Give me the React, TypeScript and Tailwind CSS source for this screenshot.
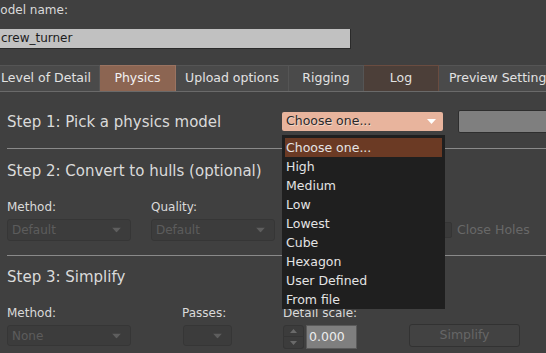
import React from "react";

const Down = ({ color, w = 9, h = 5 }: { color: string; w?: number; h?: number }) => (
  <svg width={w} height={h} viewBox={`0 0 ${w} ${h}`}>
    <path d={`M0 0H${w}L${w / 2} ${h}Z`} fill={color} />
  </svg>
);
const Up = ({ color, w = 7, h = 4 }: { color: string; w?: number; h?: number }) => (
  <svg width={w} height={h} viewBox={`0 0 ${w} ${h}`}>
    <path d={`M0 ${h}H${w}L${w / 2} 0Z`} fill={color} />
  </svg>
);

const DisabledSelect = ({ text, w, h }: { text?: string; w: string; h: string }) => (
  <div
    className={`${w} ${h} relative flex items-center rounded-[3px] border border-[#363636] bg-[#3c3c3c] pl-[4px] text-[#5c5c5c]`}
  >
    {text}
    <div className="absolute right-[9px] top-1/2 -translate-y-1/2 flex">
      <Down color="#5e5e5e" />
    </div>
  </div>
);

export default function App() {
  const items = ["Choose one...", "High", "Medium", "Low", "Lowest", "Cube", "Hexagon", "User Defined", "From file"];
  return (
    <div className="relative w-[546px] h-[353px] overflow-hidden bg-[#404040] font-['DejaVu_Sans',sans-serif] text-[12px] text-[#dadada]">
      <div className="ml-[-10px] h-[29px] pt-[3px] leading-[14px] whitespace-nowrap">Model name:</div>
      <div className="ml-[-10px] h-[20px] w-[361px] border-r border-b border-[#2a2a2a] bg-[#c1c1c1] pl-[11px] leading-[19px] text-[#1c1c1c]">
        crew_turner
      </div>

      <div className="mt-[16px] ml-[-7px] flex h-[27px] border-b border-[#6a6a6a] whitespace-nowrap text-[12.5px] text-[#e2e2e2]">
        <div className="flex h-[26px] w-[107px] shrink-0 items-center justify-center border-t border-r border-[#555] bg-[#4a4a4a]">Level of Detail</div>
        <div className="flex h-[26px] w-[76px] shrink-0 items-center justify-center border-t border-r border-[#9a7361] bg-[#8c6552] text-[#f2f2f2]">Physics</div>
        <div className="flex h-[26px] w-[113px] shrink-0 items-center justify-center border-t border-r border-[#555] bg-[#4a4a4a]">Upload options</div>
        <div className="flex h-[26px] w-[75px] shrink-0 items-center justify-center border-t border-r border-[#555] bg-[#4a4a4a]">Rigging</div>
        <div className="flex h-[26px] w-[75px] shrink-0 items-center justify-center border-t border-r border-[#6a4c40] bg-[#4c3f39]">Log</div>
        <div className="flex h-[26px] w-[124px] shrink-0 items-center justify-center border-t border-[#555] bg-[#4a4a4a]">Preview Settings</div>
      </div>

      {/* Step 1 */}
      <div className="mt-[18px] flex h-[23px] items-center">
        <div className="w-[282px] shrink-0 pl-[7px] text-[15px] leading-[18px] whitespace-nowrap">Step 1: Pick a physics model</div>
        <div className="relative flex h-[19px] w-[161px] shrink-0 items-center rounded-[2px] bg-[#e8b49d] pl-[4px] text-[12.5px] text-[#2a2a2a] [text-shadow:1px_1px_0_rgba(255,255,255,0.45)]">
          Choose one...
          <div className="absolute right-[7px] top-[7px] flex">
            <Down color="#ffffff" />
          </div>
        </div>
        <div className="ml-[15px] h-[23px] flex-1 rounded-[2px] border border-[#2e2e2e] bg-[#7f7f7f] mr-[-10px]" />
      </div>

      <div className="mt-[15px] ml-[7px] h-px bg-[#8a8a8a]" />

      {/* Step 2 */}
      <div className="mt-[13px] pl-[7px] text-[15px] leading-[18px] whitespace-nowrap">Step 2: Convert to hulls (optional)</div>
      <div className="mt-[20px] flex leading-[14px]">
        <div className="w-[151px] shrink-0 pl-[7px]">Method:</div>
        <div>Quality:</div>
      </div>
      <div className="mt-[5px] flex h-[22px] items-center pl-[7px]">
        <DisabledSelect text="Default" w="w-[124px]" h="h-[22px]" />
        <div className="ml-[20px]">
          <DisabledSelect text="Default" w="w-[124px]" h="h-[22px]" />
        </div>
        <div className="ml-[163px] h-[16px] w-[14px] shrink-0 rounded-[2px] border border-[#353535] bg-[#3a3a3a]" />
        <div className="ml-[5px] whitespace-nowrap text-[12.5px] text-[#686868]">Close Holes</div>
      </div>

      <div className="mt-[14px] ml-[7px] h-px bg-[#8a8a8a]" />

      {/* Step 3 */}
      <div className="mt-[12px] pl-[7px] text-[15px] leading-[18px] whitespace-nowrap">Step 3: Simplify</div>
      <div className="mt-[20px] flex leading-[14px] whitespace-nowrap">
        <div className="w-[182px] shrink-0 pl-[7px]">Method:</div>
        <div className="w-[101px] shrink-0">Passes:</div>
        <div>Detail scale:</div>
      </div>
      <div className="mt-[5px] flex items-start pl-[7px]">
        <DisabledSelect text="None" w="w-[124px]" h="h-[21px]" />
        <div className="ml-[52px]">
          <DisabledSelect w="w-[49px]" h="h-[21px]" />
        </div>
        <div className="ml-[51px] flex h-[24px] w-[21px] shrink-0 flex-col">
          <div className="flex h-[12px] items-center justify-center rounded-t-[3px] border border-[#353535] bg-[#3c3c3c]">
            <Up color="#6a6a6a" />
          </div>
          <div className="flex h-[12px] items-center justify-center rounded-b-[3px] border border-t-0 border-[#353535] bg-[#3c3c3c]">
            <Down color="#6a6a6a" w={7} h={4} />
          </div>
        </div>
        <div className="ml-[2px] flex h-[24px] w-[51px] shrink-0 items-center border border-[#5a5a5a] bg-[#7f7f7f] pl-[2px] text-[12.5px] text-[#ececec]">0.000</div>
        <div className="ml-[52px] mt-[-1px] flex h-[23px] w-[111px] shrink-0 items-center justify-center rounded-[3px] border border-[#323232] bg-[#424242] text-[12.5px] text-[#666]">
          Simplify
        </div>
      </div>

      {/* Dropdown list */}
      <div className="absolute left-[282px] top-[135px] h-[174px] w-[163px] bg-[#1f1f1f] px-[3px] pt-[3px] text-[12.5px] text-[#e4e4e4]">
        {items.map((t, i) => (
          <div key={t} className={`h-[19px] pl-[1px] leading-[19px] whitespace-nowrap ${i === 0 ? "bg-[#6b3a24]" : ""}`}>
            {t}
          </div>
        ))}
      </div>
    </div>
  );
}
